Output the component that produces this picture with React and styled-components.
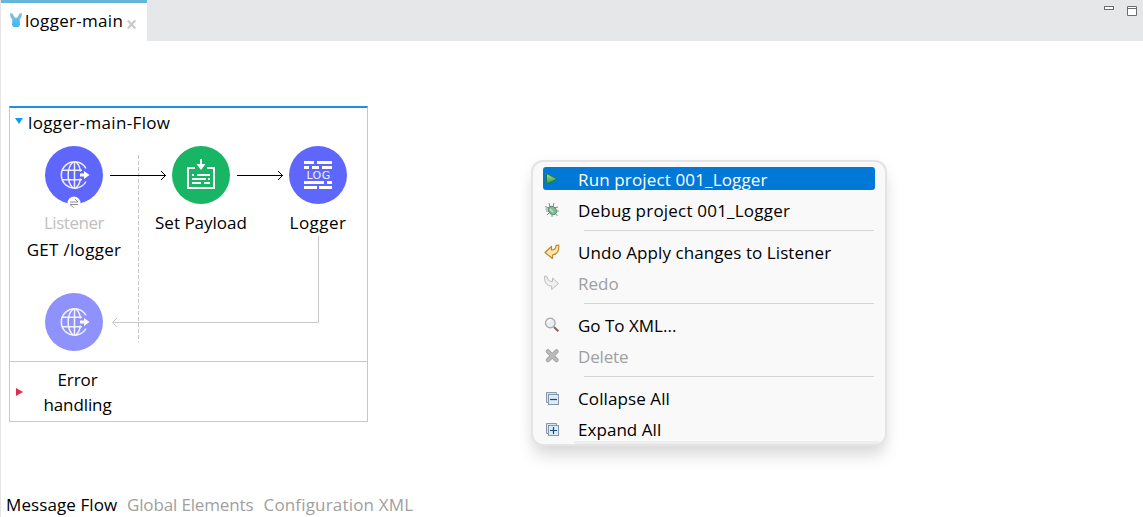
import React from "react";
import styled, { createGlobalStyle } from "styled-components";

const GlobalStyle = createGlobalStyle`
  * { box-sizing: border-box; }
  html, body { margin: 0; padding: 0; background: #fff; overflow: hidden; }
`;

const Editor = styled.div`
  position: relative;
  display: flex;
  flex-direction: column;
  width: 1143px;
  height: 517px;
  border-left: 1px solid #e4e4e5;
  background: #fff;
  color: #000;
  font: 17px/24px "Open Sans", "Noto Sans", sans-serif;
  white-space: nowrap;
`;

const TabStrip = styled.header`
  display: flex;
  justify-content: space-between;
  flex: none;
  height: 41px;
  background: #e6e7e9;
`;

const EditorTab = styled.div`
  display: flex;
  align-items: flex-start;
  width: 146px;
  padding: 6px 0 0 8px;
  border-top: 3px solid #68b5db;
  background: #fff;

  svg { flex: none; }
`;

const TabTitle = styled.span`
  width: 101px;
  padding-left: 2px;
  letter-spacing: 0.3px;
`;

const WindowControls = styled.div`
  display: flex;
  gap: 13px;
  padding: 6px 6px 0 0;
`;

const Canvas = styled.main`
  flex: 1;
  padding: 65px 0 0 8px;
`;

const FlowBox = styled.section`
  display: flex;
  flex-direction: column;
  width: 359px;
  height: 316px;
  border: 1px solid #c8c8c8;
  border-top: 2px solid #1f8fe9;
`;

const FlowStage = styled.div`
  position: relative;
  height: 253px;
`;

const FlowTitle = styled.div`
  display: flex;
  align-items: center;
  gap: 5px;
  padding: 3px 0 0 5px;
  letter-spacing: 0.35px;
`;

const Wires = styled.svg`
  position: absolute;
  left: 0;
  top: 0;
`;

const Node = styled.div`
  position: absolute;
  left: ${(p) => p.$x - 60}px;
  top: ${(p) => p.$y - 29}px;
  width: 120px;
  display: flex;
  flex-direction: column;
  align-items: center;
`;

const Disc = styled.div`
  position: relative;
  width: 58px;
  height: 58px;
  border-radius: 50%;
  background: ${(p) => p.$color};

  svg { display: block; }
`;

const NodeLabel = styled.div`
  height: 27px;
  line-height: 24px;
  color: ${(p) => p.$color || "#000"};
  letter-spacing: ${(p) => p.$tracking || 0}px;
`;

const NodeText = styled.div`
  display: flex;
  flex-direction: column;
  align-items: center;
  padding-top: 7px;
`;

const ErrorSection = styled.div`
  display: flex;
  align-items: center;
  flex: 1;
  padding-left: 6px;
  border-top: 1px solid #c8c8c8;
`;

const ErrorLabel = styled.div`
  width: 109px;
  padding-top: 1px;
  line-height: 25px;
  text-align: center;
  letter-spacing: -0.1px;
`;

const BottomTabs = styled.footer`
  display: flex;
  flex: none;
  height: 24px;
  padding-left: 5px;
`;

const BottomTab = styled.span`
  width: ${(p) => p.$width}px;
  color: ${(p) => (p.$active ? "#000" : "#a0a0a0")};
  letter-spacing: ${(p) => p.$tracking || 0}px;
`;

const Menu = styled.nav`
  position: absolute;
  left: 530px;
  top: 160px;
  display: flex;
  flex-direction: column;
  width: 356px;
  height: 286px;
  padding: 2px 10px 0;
  border: 2px solid #e4e4e4;
  border-radius: 12px;
  background: #f9f9f9;
  box-shadow: 0 12px 16px -2px rgba(0, 0, 0, 0.13), 0 2px 14px rgba(0, 0, 0, 0.04);
`;

const MenuFoot = styled.div`
  position: absolute;
  left: 41px;
  right: 6px;
  bottom: 0;
  height: 3px;
  background: #eeeeee;
`;

const MenuItem = styled.div`
  position: relative;
  display: flex;
  flex: none;
  align-items: center;
  height: 23px;
  margin: 3px 0 5px;
  padding-left: 1px;
  border-radius: 3px;
  color: ${(p) => (p.$active ? "#fff" : p.$disabled ? "#a0a0a0" : "#000")};
  background: ${(p) => (p.$active ? "#0078d7" : "transparent")};

  svg { flex: none; }
`;

const MenuText = styled.span`
  padding: 2px 0 0 18px;
  letter-spacing: ${(p) => p.$tracking || 0}px;
`;

const Separator = styled.div`
  flex: none;
  height: 1px;
  margin: 4px 1px 6px 41px;
  background: #d4d4d4;
`;

const BadgeLayer = styled.div`
  position: absolute;
  inset: 0;

  svg { overflow: visible; }
`;

const LogWord = styled.span`
  position: absolute;
  left: 1px;
  right: 0;
  top: 23px;
  text-align: center;
  color: #f0f0ff;
  font: 11px/13px "DejaVu Sans", sans-serif;
  letter-spacing: 0.4px;
`;

const Globe = () => (
  <svg width="58" height="58" viewBox="0 0 58 58" fill="none" stroke="#fff" strokeOpacity=".9" strokeWidth="1.500">
    <path d="M41 22.500A13.200 13.200 0 1 0 41 35.500" />
    <path d="M29.500 16V42M28 16C21.500 22 21.500 36 28 42M31 16C33.500 18.500 35.200 22 35.300 25.500M31 42C33.500 39.500 35.200 36 35.300 32.500M17.500 24.300H37M17.500 33.700H37" />
    <path d="M35 27.500H39V25L44.500 29L39 33V30.500H35Z" fill="#fff" stroke="none" />
  </svg>
);

const ExchangeBadge = () => (
  <svg width="58" height="58" viewBox="0 0 58 58" fill="none">
    <circle cx="29" cy="57" r="6.500" fill="#fff" />
    <path d="M25 56H33L30 53M33 58.500H25L28.500 61.500" stroke="#8f8f8f" />
  </svg>
);

const PayloadIcon = () => (
  <svg width="58" height="58" viewBox="0 0 58 58" fill="none">
    <path d="M23 22H16V42H42V22H35" stroke="#fff" strokeWidth="2" />
    <path d="M29 13V19" stroke="#fff" strokeWidth="2" />
    <path d="M24.500 18H33.500L29 24Z" fill="#fff" />
    <path d="M20 29H22M25 29H38M20 33H34M36 33H38M20 37H29M32 37H38" stroke="#fff" strokeWidth="2" />
  </svg>
);

const LogIcon = () => (
  <svg width="58" height="58" viewBox="0 0 58 58" stroke="#fff" strokeWidth="3">
    <path d="M15 16.500H25M28 16.500H43M15 21.500H20M23 21.500H30M33 21.500H43M15 36.500H35M38 36.500H43M15 41.500H28M30 41.500H43" />
  </svg>
);

const Flow = () => (
  <FlowBox>
    <FlowStage>
      <FlowTitle>
        <svg width="8" height="10"><path d="M0 0H8L4 6Z" fill="#0d9bf5" /></svg>
        logger-main-Flow
      </FlowTitle>
      <Wires width="357" height="253" fill="none">
        <path d="M128.500 47V234" stroke="#c6c6c6" strokeDasharray="4 2" />
        <path d="M308.500 128V214.500H103M107 210L102.500 214.500L107 219" stroke="#c8c8c8" />
        <path d="M100 67.500H156M151 63L155.500 67.500L151 72M227 67.500H273M268 63L272.500 67.500L268 72" stroke="#000" />
      </Wires>
      <Node $x={64} $y={67}>
        <Disc $color="#5f66fb">
          <Globe />
          <BadgeLayer><ExchangeBadge /></BadgeLayer>
        </Disc>
        <NodeText>
          <NodeLabel $color="#c0c0c0" $tracking={-0.45}>Listener</NodeLabel>
          <NodeLabel $tracking={0.3}>GET /logger</NodeLabel>
        </NodeText>
      </Node>
      <Node $x={191} $y={67}>
        <Disc $color="#18b565"><PayloadIcon /></Disc>
        <NodeText><NodeLabel>Set Payload</NodeLabel></NodeText>
      </Node>
      <Node $x={308} $y={67}>
        <Disc $color="#5f66fb"><LogIcon /><LogWord>LOG</LogWord></Disc>
        <NodeText><NodeLabel $tracking={0.45}>Logger</NodeLabel></NodeText>
      </Node>
      <Node $x={64} $y={214}>
        <Disc $color="#8f92fd"><Globe /></Disc>
      </Node>
    </FlowStage>
    <ErrorSection>
      <svg width="7" height="8"><path d="M0 0L7 4L0 8Z" fill="#d8304f" /></svg>
      <ErrorLabel>Error<br />handling</ErrorLabel>
    </ErrorSection>
  </FlowBox>
);

const iconBox = { width: 16, height: 16, viewBox: "0 0 16 16" };

const RunIcon = () => (
  <svg {...iconBox}>
    <defs><linearGradient id="run" x2="0" y2="1"><stop stopColor="#a8dca2" /><stop offset="1" stopColor="#309a3a" /></linearGradient></defs>
    <path d="M2.500 2.500L13 8L2.500 13Z" fill="url(#run)" stroke="#287c40" />
  </svg>
);

const BugIcon = () => (
  <svg {...iconBox} fill="none">
    <path d="M5 1L6 5M10 1L9 5M1 4.500L5 6M2 9H5M3 13L6 10M14 5L10 6M15 9H11M13.500 14L11 11M8 15V12M1.500 7L4 7" stroke="#6e9487" />
    <ellipse cx="8.500" cy="8.500" rx="3.600" ry="4.500" transform="rotate(-40 8.500 8.500)" fill="#83bd8c" stroke="#5c8c7a" />
    <path d="M6 7L9 10" stroke="#c3e3be" strokeWidth="1.500" />
  </svg>
);

const UndoIcon = () => (
  <svg {...iconBox}>
    <path d="M1 8.500L7.500 2.500V6C10.500 6 11.800 4.500 12 1.700L14.700 1C15.300 6.500 13 10.500 8.500 11V14.500Z" fill="#fde8a9" stroke="#bf852d" strokeWidth="1.200" strokeLinejoin="round" />
  </svg>
);

const RedoIcon = () => (
  <svg {...iconBox}>
    <path d="M14.500 8.500L8.500 3V6.500C5 6.500 3.500 5 3.200 2L.7 1C0 7 2.500 11 7.700 11V14.500Z" fill="#f0f0f0" stroke="#bcbcbc" strokeLinejoin="round" />
  </svg>
);

const SearchIcon = () => (
  <svg {...iconBox}>
    <path d="M10 10L14.300 14.300" stroke="#896159" strokeWidth="2" />
    <circle cx="6.300" cy="6" r="4.800" fill="#ebedf5" stroke="#aaa39e" strokeWidth="1.300" />
    <path d="M3.500 6A3 3 0 0 1 7 3.200" fill="none" stroke="#fff" strokeWidth="1.500" />
  </svg>
);

const DeleteIcon = () => (
  <svg {...iconBox} fill="none" strokeLinecap="round">
    <path d="M4 3.500L12.500 12M12.500 3.500L4 12" stroke="#a5a5a5" strokeWidth="4.500" />
    <path d="M4 3.500L12.500 12M12.500 3.500L4 12" stroke="#b9b9b9" strokeWidth="2.700" />
  </svg>
);

const TreeIcon = ({ plus }) => (
  <svg {...iconBox} fill="none">
    <path d="M2.500 12.500V2.500H12.500V4.500H4.500V12.500Z" fill="#d9e5ee" stroke="#8799b0" />
    <rect x="4.500" y="4.500" width="10" height="10" fill="#d8edf4" stroke="#8496ac" />
    <path d={plus ? "M6 9.500H13M9.500 6V13" : "M6 9.500H13"} stroke="#174a7b" strokeWidth="1.200" />
  </svg>
);

const CollapseIcon = () => <TreeIcon />;
const ExpandIcon = () => <TreeIcon plus />;

const groups = [
  [
    { label: "Run project 001_Logger", Icon: RunIcon, active: true, tracking: 0.14 },
    { label: "Debug project 001_Logger", Icon: BugIcon, tracking: 0.21 },
  ],
  [
    { label: "Undo Apply changes to Listener", Icon: UndoIcon, tracking: 0.08 },
    { label: "Redo", Icon: RedoIcon, disabled: true },
  ],
  [
    { label: "Go To XML...", Icon: SearchIcon },
    { label: "Delete", Icon: DeleteIcon, disabled: true, tracking: -0.15 },
  ],
  [
    { label: "Collapse All", Icon: CollapseIcon, tracking: 0.1 },
    { label: "Expand All", Icon: ExpandIcon, tracking: 0.05 },
  ],
];

const ContextMenu = () => (
  <Menu>
    <MenuFoot />
    {groups.map((items, i) => (
      <React.Fragment key={i}>
        {i > 0 && <Separator />}
        {items.map(({ label, Icon, active, disabled, tracking }) => (
          <MenuItem key={label} $active={active} $disabled={disabled}>
            <Icon />
            <MenuText $tracking={tracking}>{label}</MenuText>
          </MenuItem>
        ))}
      </React.Fragment>
    ))}
  </Menu>
);

const FoxIcon = () => (
  <svg width="14" height="20" viewBox="0 0 14 20">
    <defs><linearGradient id="fox" x2="0" y2="1"><stop stopColor="#8fc3da" /><stop offset="1" stopColor="#35b8f6" /></linearGradient></defs>
    <path d="M1.300 4L3.300 4.300L5.700 8.500Q7 9 8.300 8.500L10.700 4.300L12.700 4Q13.500 7.500 10.700 10.500L11 16L9.500 18H4.500L3 16L3.300 10.500Q.5 7.500 1.300 4Z" fill="url(#fox)" />
  </svg>
);

export default function App() {
  return (
    <Editor>
      <GlobalStyle />
      <TabStrip>
        <EditorTab>
          <FoxIcon />
          <TabTitle>logger-main</TabTitle>
          <svg width="14" height="22"><path d="M3.800 11.500L11.300 19.500M11.300 11.500L3.800 19.500" stroke="#c9c9c9" strokeWidth="2.200" /></svg>
        </EditorTab>
        <WindowControls>
          <svg width="10" height="10"><rect x=".5" y=".5" width="9" height="3" fill="#fff" stroke="#6d6d6d" /></svg>
          <svg width="10" height="10"><path d="M.5 .5H9.500V9.500H.5ZM.5 2.500H9.500" fill="#fff" stroke="#6d6d6d" /></svg>
        </WindowControls>
      </TabStrip>
      <Canvas><Flow /></Canvas>
      <BottomTabs>
        <BottomTab $width={121} $tracking={0.1} $active>Message Flow</BottomTab>
        <BottomTab $width={136.5} $tracking={-0.15}>Global Elements</BottomTab>
        <BottomTab $width={160} $tracking={0.17}>Configuration XML</BottomTab>
      </BottomTabs>
      <ContextMenu />
    </Editor>
  );
}
